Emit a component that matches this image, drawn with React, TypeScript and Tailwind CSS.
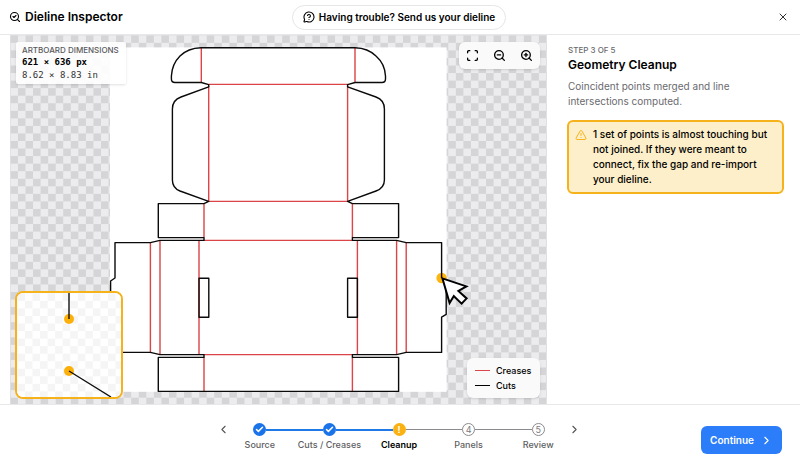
import {
  Check,
  ChevronLeft,
  ChevronRight,
  MessageCircleQuestionMark,
  Scan,
  SearchCheck,
  TriangleAlert,
  X,
  ZoomIn,
  ZoomOut,
} from "lucide-react";
import clsx from "clsx";

type StepState = "done" | "warning" | "todo";

const STEPS: { label: string; state: StepState }[] = [
  { label: "Source", state: "done" },
  { label: "Cuts / Creases", state: "done" },
  { label: "Cleanup", state: "warning" },
  { label: "Panels", state: "todo" },
  { label: "Review", state: "todo" },
];

const CREASES = [
  "M201.3 48V82.5M355 48V82.5",
  "M208.7 84.4H347.6M208.7 86V201.4M347.6 86V201.4M208.7 201.4H347.6",
  "M204 203.6V237.6M352.4 203.6V237.6M204 240.4H352.4",
  "M199 240.4V354.6M357.4 240.4V354.6",
  "M150.4 242.6V352.4M160 240.4V354.6M396.6 240.4V354.6M406.2 242.6V352.4",
  "M204 354.6H352.4M204 357.4V391.3M352.4 357.4V391.3",
];

const CUTS = [
  // lid tuck flap
  "M201.3 82.5H175Q171.4 82.5 171.4 79V76Q172 64 180 56Q188 48 201 47.7H355Q368 48 376 56Q385 64 385.5 76V79Q385.5 82.5 382 82.5H355",
  // lid side flaps
  "M201.3 82.5L208.7 84.6V86.8L181 97Q172.4 100 172.4 109V180Q172.4 188 180 191L208.7 201.4L204 203.6",
  "M355 82.5L347.6 84.6V86.8L376 97Q384.4 100 384.4 109V180Q384.4 188 376 191L347.6 201.4L352.4 203.6",
  // back panel wings
  "M204 203.6H158.3V237.6H204V240.4H160L150.4 242.6H115V278L110.6 281V314.4L115 317.4V352.4H150.4L160 354.6H204V357.4H158.3V391.4H398.6V357.4H352.4V354.6H396.6L406.2 352.4H441.6V317.2L446.2 314.4V281",
  "M352.4 203.6H398.6V237.6H352.4V240.4H396.6L406.2 242.6H441.6V278",
  // locking slots
  "M199 278.2H208.8V317.3H199ZM347.6 278.2H357.4V317.3H347.6Z",
];

function Checker({ id, light, dark }: { id: string; light: string; dark: string }) {
  return (
    <svg className="absolute inset-0 h-full w-full" aria-hidden="true">
      <defs>
        <pattern id={id} x="0.4" y="0.3" width="15.1" height="15.1" patternUnits="userSpaceOnUse">
          <rect width="15.1" height="15.1" fill={light} />
          <rect width="7.55" height="7.55" fill={dark} />
          <rect x="7.55" y="7.55" width="7.55" height="7.55" fill={dark} />
        </pattern>
      </defs>
      <rect width="100%" height="100%" fill={`url(#${id})`} />
    </svg>
  );
}

function Dieline() {
  return (
    <svg
      viewBox="10 35 537 369"
      className="absolute inset-0 h-full w-full"
      role="img"
      aria-label="Dieline"
      fill="none"
    >
      <rect x="110" y="47.4" width="336.6" height="344.4" fill="#fff" />
      <path d={CREASES.join("")} stroke="#dc4448" strokeWidth="1.4" />
      <circle cx="441.6" cy="278" r="5.2" fill="#fdb50f" />
      <path d={CUTS.join("")} stroke="#0a0a0a" strokeWidth="1.4" strokeLinejoin="round" />
      <path
        d="M442.4 278.4L466.4 286.4L458.4 291L466.6 298.4L461.6 303.6L453.8 296L449.6 303Z"
        fill="#fff"
        stroke="#000"
        strokeWidth="2"
      />
    </svg>
  );
}

function GapPreview() {
  return (
    <div className="absolute bottom-[5px] left-[5px] h-[108px] w-[108px] overflow-hidden rounded-lg border-2 border-[#f6b21b] bg-white">
      <Checker id="preview-checker" light="#ffffff" dark="#f5f5f6" />
      <svg viewBox="17 293 104 104" className="absolute inset-0 h-full w-full" aria-hidden="true">
        <circle cx="69" cy="319" r="5" fill="#fdb00a" />
        <circle cx="69" cy="371" r="5" fill="#fdb00a" />
        <path d="M69 293V319M69 371L111 397" stroke="#111" strokeWidth="1.4" />
      </svg>
    </div>
  );
}

function StepDot({ state, index }: { state: StepState; index: number }) {
  return (
    <span
      className={clsx(
        "flex h-[13px] w-[13px] shrink-0 items-center justify-center rounded-full text-[9px] leading-none",
        state === "done" && "bg-[#1a73e8] text-white",
        state === "warning" && "bg-[#fbb112] font-bold text-white",
        state === "todo" && "border border-[#8b8b8f] text-[#7a7a7e]"
      )}
    >
      {state === "done" && <Check className="h-[9px] w-[9px]" strokeWidth={4} />}
      {state === "warning" && "!"}
      {state === "todo" && index + 1}
    </span>
  );
}

function Stepper() {
  const current = STEPS.findIndex((s) => s.state === "warning");

  function lineClass(segment: number) {
    if (segment < 0 || segment >= STEPS.length - 1) return "bg-transparent";
    return segment < current ? "h-[2px] bg-[#1f7ae8]" : "h-px bg-[#8b8b8f]";
  }

  return (
    <nav className="flex items-start" aria-label="Steps">
      <button aria-label="Previous step" className="relative -mr-[5px] text-[#555]">
        <ChevronLeft className="h-[13px] w-[13px]" />
      </button>
      <ol className="grid w-[348px] grid-cols-5">
        {STEPS.map((step, i) => (
          <li key={step.label} className="flex flex-col items-center gap-[3px]">
            <div className="flex w-full items-center">
              <span className={clsx("flex-1", lineClass(i - 1))} />
              <StepDot state={step.state} index={i} />
              <span className={clsx("flex-1", lineClass(i))} />
            </div>
            <span
              className={clsx(
                "whitespace-nowrap text-[9px] leading-[11px]",
                i === current ? "font-semibold text-black" : "font-medium text-[#5f5f63]"
              )}
            >
              {step.label}
            </span>
          </li>
        ))}
      </ol>
      <button aria-label="Next step" className="relative -ml-[5px] text-[#555]">
        <ChevronRight className="h-[13px] w-[13px]" />
      </button>
    </nav>
  );
}

export default function App() {
  return (
    <div className="flex min-h-screen flex-col bg-white font-['Inter',sans-serif] text-black">
      <header className="grid h-[35px] grid-cols-[1fr_auto_1fr] items-center border-b border-[#e8e8ea] pl-[9px] pr-[11px]">
        <h1 className="flex items-center gap-1 text-[12px] font-semibold">
          <SearchCheck className="h-[12px] w-[12px]" strokeWidth={2.2} />
          Dieline Inspector
        </h1>
        <button className="flex h-[25px] items-center gap-1 rounded-full border border-[#e6e6e8] px-[10px] text-[10px] font-semibold">
          <MessageCircleQuestionMark className="h-[12px] w-[12px]" strokeWidth={2.2} />
          Having trouble? Send us your dieline
        </button>
        <button aria-label="Close" className="justify-self-end text-[#333]">
          <X className="h-[12px] w-[12px]" />
        </button>
      </header>

      <main className="flex flex-1">
        <section className="relative ml-[10px] flex-1 overflow-hidden" aria-label="Artboard">
          <Checker id="canvas-checker" light="#ececee" dark="#d5d5d8" />
          <Dieline />

          <div className="absolute left-[6px] top-[7px] w-[110px] rounded-xs bg-white/90 px-[6px] py-[2px] shadow-sm">
            <div className="whitespace-nowrap text-[8px] font-medium leading-[12px] text-[#5a5a5d]">
              ARTBOARD DIMENSIONS
            </div>
            <div className="whitespace-nowrap font-['DejaVu_Sans_Mono',monospace] text-[9px] leading-[13px]">
              <div className="font-bold">621 × 636 px</div>
              <div className="text-[#333]">8.62 × 8.83 in</div>
            </div>
          </div>

          <div className="absolute right-[7px] top-[7px] flex h-[27px] w-[81px] items-center justify-around rounded-md bg-[#fafafb] shadow-sm">
            <button aria-label="Fit to screen">
              <Scan className="h-[13px] w-[13px]" strokeWidth={2.4} />
            </button>
            <button aria-label="Zoom out">
              <ZoomOut className="h-[13px] w-[13px]" strokeWidth={2.4} />
            </button>
            <button aria-label="Zoom in">
              <ZoomIn className="h-[13px] w-[13px]" strokeWidth={2.4} />
            </button>
          </div>

          <ul className="absolute bottom-[6px] right-[7px] w-[73px] rounded-md bg-[#fafafb] px-2 py-[5px] text-[9px] font-medium leading-[15px] shadow-sm">
            <li className="flex items-center gap-[6px]">
              <span className="h-px w-[15px] shrink-0 bg-[#dc4448]" />
              Creases
            </li>
            <li className="flex items-center gap-[6px]">
              <span className="h-px w-[15px] shrink-0 bg-black" />
              Cuts
            </li>
          </ul>

          <GapPreview />
        </section>

        <aside className="w-[253px] pl-5 pr-4 pt-[10px]">
          <div className="px-px">
            <p className="text-[8px] font-medium leading-[11px] text-[#6a6a6e]">STEP 3 OF 5</p>
            <h2 className="text-[12px] font-semibold leading-[18px]">Geometry Cleanup</h2>
            <p className="mt-[5px] text-[10px] leading-[15px] text-[#6a6a6e]">
              Coincident points merged and line intersections computed.
            </p>
          </div>
          <div
            role="alert"
            className="mt-[11px] flex gap-[6px] rounded-md border-2 border-[#f6b21b] bg-[#fdefc9] px-[6px] py-[5px]"
          >
            <TriangleAlert className="mt-[2px] h-[12px] w-[12px] shrink-0 text-[#f9b318]" />
            <p className="text-[10px] font-medium leading-[15px]">
              1 set of points is almost touching but not joined. If they were meant to connect, fix
              the gap and re-import your dieline.
            </p>
          </div>
        </aside>
      </main>

      <footer className="grid h-[58px] grid-cols-[1fr_auto_1fr] items-start border-t border-[#e8e8ea] pl-4 pr-[18px] pt-[18px]">
        <span />
        <Stepper />
        <button className="mt-[3px] flex h-[28px] items-center gap-[6px] justify-self-end rounded-md bg-[#2b7df9] px-[9px] text-[10px] font-semibold text-white">
          Continue
          <ChevronRight className="h-[13px] w-[13px]" />
        </button>
      </footer>
    </div>
  );
}
